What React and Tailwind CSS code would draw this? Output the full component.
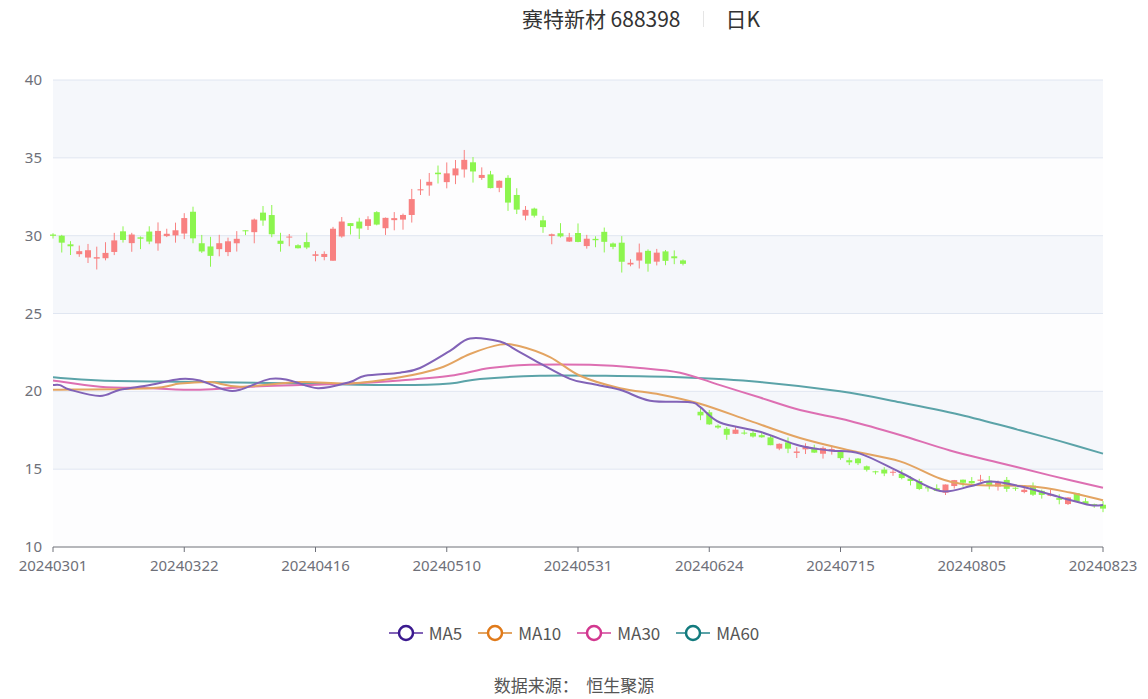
import React from "react";

const X0 = 53, X1 = 1103, Y40 = 80, Y10 = 547;
const yv = (v) => Y10 - ((v - 10) / 30) * (Y10 - Y40);

function smooth(pts) {
  const p = pts.map(([x, v]) => [x, yv(v)]);
  let d = `M${p[0][0]},${p[0][1]}`;
  for (let i = 0; i < p.length - 1; i++) {
    const p0 = p[i - 1] || p[i], p1 = p[i], p2 = p[i + 1], p3 = p[i + 2] || p2;
    const c1 = [p1[0] + (p2[0] - p0[0]) / 6, p1[1] + (p2[1] - p0[1]) / 6];
    const c2 = [p2[0] - (p3[0] - p1[0]) / 6, p2[1] - (p3[1] - p1[1]) / 6];
    d += ` C${c1[0]},${c1[1]} ${c2[0]},${c2[1]} ${p2[0]},${p2[1]}`;
  }
  return d;
}

const MA5 = [[53,20.4],[60,20.4],[70,20.1],[100,19.7],[120,20.1],[150,20.4],[180,20.8],[200,20.7],[225,20.1],[240,20.1],[270,20.8],[290,20.7],[318,20.2],[350,20.6],[365,21.0],[400,21.2],[420,21.5],[450,22.6],[470,23.4],[500,23.2],[515,22.7],[540,21.8],[570,20.8],[590,20.5],[620,20.1],[650,19.4],[690,19.3],[700,19.0],[720,18.0],[760,17.4],[800,16.5],[830,16.2],[860,16.0],[900,14.8],[940,13.6],[970,13.9],[990,14.2],[1020,13.9],[1060,13.2],[1090,12.7],[1103,12.7]];
const MA10 = [[53,20.1],[150,20.2],[180,20.5],[210,20.6],[240,20.3],[300,20.6],[350,20.5],[400,20.9],[440,21.5],[470,22.4],[500,23.0],[520,22.9],[550,22.2],[580,21.0],[620,20.2],[660,19.8],[700,19.2],[750,18.1],[800,17.0],[850,16.2],[900,15.5],[940,14.4],[970,14.0],[1030,13.9],[1070,13.5],[1103,13.0]];
const MA30 = [[53,20.7],[100,20.3],[150,20.2],[200,20.1],[250,20.3],[300,20.4],[350,20.5],[400,20.7],[450,21.0],[490,21.5],[530,21.7],[590,21.7],[640,21.5],[680,21.2],[720,20.4],[760,19.6],[800,18.8],[850,18.1],[900,17.2],[950,16.2],[1000,15.4],[1050,14.6],[1103,13.8]];
const MA60 = [[53,20.9],[100,20.7],[200,20.6],[300,20.5],[400,20.4],[450,20.5],[480,20.8],[540,21.0],[600,21.0],[680,20.9],[760,20.6],[840,20.0],[900,19.3],[960,18.5],[1020,17.5],[1060,16.8],[1103,16.0]];

const KP = [[53,30],[80,28.8],[100,29],[120,30.1],[150,29.9],[180,31],[200,29.3],[215,28.8],[240,30.3],[260,31.2],[280,30],[300,29.5],[318,28.7],[340,30.8],[360,30.5],[385,31.5],[400,31],[420,33],[440,34],[460,34.2],[467,35.3],[480,33.8],[500,33],[530,31],[560,30],[580,30],[600,29.3],[630,28.5],[660,28.4],[688,28],[695,18.9],[715,17.5],[750,17.3],[790,16.3],[830,16.3],[860,15.3],[900,14.5],[930,13.6],[950,14.2],[980,14.1],[1020,13.8],[1060,13.2],[1103,12.7]];

function interp(x) {
  for (let i = 0; i < KP.length - 1; i++) {
    if (x >= KP[i][0] && x <= KP[i + 1][0]) {
      const t = (x - KP[i][0]) / (KP[i + 1][0] - KP[i][0] || 1);
      return KP[i][1] + t * (KP[i + 1][1] - KP[i][1]);
    }
  }
  return KP[KP.length - 1][1];
}

let seed = 7;
const rnd = () => { seed = (seed * 9301 + 49297) % 233280; return seed / 233280; };
const candles = [];
const N = 121, step = (X1 - X0) / (N - 1);
let prev = 30;
for (let i = 0; i < N; i++) {
  const x = X0 + i * step;
  if (x > 690 && x < 694) continue;
  const base = interp(x);
  const scale = base > 25 ? 1.2 : 0.55;
  const c = base + (rnd() - 0.5) * 0.9 * scale;
  let o = (Math.abs(prev - c) > 5 ? c : prev) + (rnd() - 0.5) * 1.0 * scale;
  const hi = Math.max(o, c) + rnd() * 0.6 * scale;
  const lo = Math.min(o, c) - rnd() * 0.6 * scale;
  candles.push({ x, o, c, hi, lo });
  prev = c;
}

const xl = ["20240301","20240322","20240416","20240510","20240531","20240624","20240715","20240805","20240823"];

export default function App() {
  const font = { fontFamily: "'Noto Sans CJK SC', 'Noto Sans', sans-serif" };
  return (
    <div className="w-[1148px] h-[699px] bg-white relative overflow-hidden" style={font}>
      <div className="flex justify-center items-center pt-[8px] h-[30px] text-[21px] text-[#333] pl-[134px]">
        <span>赛特新材 688398</span>
        <span className="mx-[22px] w-px h-[16px] bg-[#e5e5e5]"></span>
        <span>日K</span>
      </div>
      <svg className="absolute left-0 top-0" width="1148" height="600">
        {[0,1,2,3,4,5].map(i => (
          <rect key={i} x={X0} y={yv(40 - i*5)} width={X1-X0} height={yv(35)-yv(40)} fill={i%2===0 ? "#f5f7fb" : "#fdfdfe"} />
        ))}
        {[10,15,20,25,30,35,40].map(v => (
          <g key={v}>
            {v>10 && <line x1={X0} x2={X1} y1={yv(v)} y2={yv(v)} stroke="#e0e6f1" />}
            <text x={42} y={yv(v)+5} textAnchor="end" fontSize="15" fill="#6e7079" fontFamily="'Noto Sans', sans-serif">{v}</text>
          </g>
        ))}
        {candles.map((k, i) => {
          const up = k.c >= k.o;
          const col = up ? "#f88181" : "#8cf54e";
          const top = yv(Math.max(k.o, k.c)), bot = yv(Math.min(k.o, k.c));
          return (
            <g key={i}>
              <line x1={k.x} x2={k.x} y1={yv(k.hi)} y2={yv(k.lo)} stroke={col} strokeWidth="1" />
              <rect x={k.x-3} y={top} width="6" height={Math.max(1, bot-top)} fill={col} />
            </g>
          );
        })}
        <path d={smooth(MA60)} fill="none" stroke="#5ba3a8" strokeWidth="2" />
        <path d={smooth(MA30)} fill="none" stroke="#dd6fb2" strokeWidth="2" />
        <path d={smooth(MA10)} fill="none" stroke="#e3a462" strokeWidth="2" />
        <path d={smooth(MA5)} fill="none" stroke="#8263b7" strokeWidth="2" />
        <line x1={X0} x2={X1} y1={Y10} y2={Y10} stroke="#6e7079" />
        {xl.map((l, i) => {
          const x = X0 + i * 131.25;
          return (
            <g key={l}>
              <line x1={x} x2={x} y1={Y10} y2={Y10+5} stroke="#6e7079" />
              <text x={x} y={571} textAnchor="middle" fontSize="15" fill="#6e7079" fontFamily="'Noto Sans', sans-serif">{l}</text>
            </g>
          );
        })}
      </svg>
      <div className="absolute left-0 right-0 top-[620px] flex justify-center gap-[16px] text-[17px] text-[#555]">
        {[["MA5","#3b1a8f","#8263b7"],["MA10","#e07a1a","#e3a462"],["MA30","#d2378f","#dd6fb2"],["MA60","#137b7e","#5ba3a8"]].map(([n,c,l]) => (
          <div key={n} className="flex items-center gap-[6px]">
            <svg width="34" height="20"><line x1="0" x2="34" y1="10" y2="10" stroke={l} strokeWidth="2"/><circle cx="17" cy="10" r="7" fill="white" stroke={c} strokeWidth="2.5"/></svg>
            <span>{n}</span>
          </div>
        ))}
      </div>
      <div className="absolute left-0 right-0 top-[672px] text-center text-[17px] text-[#555]">数据来源：&nbsp;&nbsp;恒生聚源</div>
    </div>
  );
}
